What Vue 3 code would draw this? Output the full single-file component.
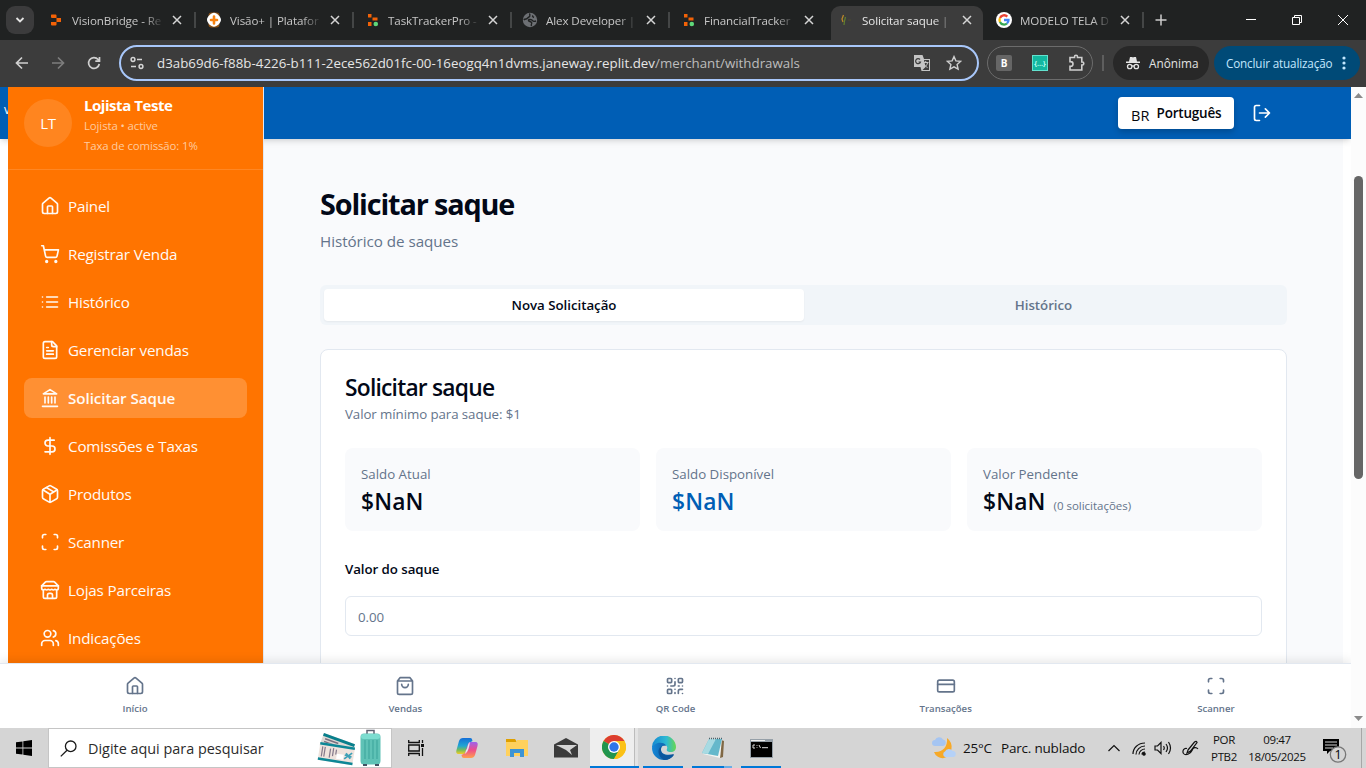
<script setup>
const replit = '<path fill="#f26207" d="M3.500 2.500h4a1 1 0 0 1 1 1V6H4a1 1 0 0 1-1-1V3zM8.500 6H13v4H8.500zM3 10h5.500v2.500a1 1 0 0 1-1 1H4a1 1 0 0 1-1-1z"/>'
const tracker = '<path fill="#f26207" d="M4 2h3.500v3.500H4zM8.500 5.500h5V8.500h-5zM4 10h3.500v4H4z"/><circle cx="11.800" cy="12" r="2.300" fill="#5fd87a"/>'
const tabs = [
  { label: 'VisionBridge - Re', icon: replit },
  { label: 'Visão+ | Platafor', icon: '<rect x="2.500" y=".5" width="11" height="15" rx="3" fill="#8b5216"/><path d="M8 .8c3 0 7 4 7 7s-4 7-7 7-7-4-7-7 4-7 7-7z" fill="#fff"/><path d="M8 4.500v7M5 8h6" stroke="#f7820f" stroke-width="2.600" stroke-linecap="round"/>' },
  { label: 'TaskTrackerPro -', icon: tracker },
  { label: 'Alex Developer |', icon: '<circle cx="8" cy="8" r="7.200" fill="#6d7074"/><path d="M8 1.500C7 3 9 4 7 5S5.500 7 4 7 1.800 8 1.800 8M9.500 14c-1-2 1-2 0-3.500S7 10 6.500 8.500 10 7.500 10.500 8.500s2 1 3.500.5M11 3.500c-1 1 0 1.500 1 2" fill="none" stroke="#202222" stroke-width="1.400"/>' },
  { label: 'FinancialTracker', icon: tracker },
  { label: 'Solicitar saque |', active: true, icon: '<path d="M5.500 3 4 7l1 3" fill="none" stroke="#b8862a" stroke-width="1.300"/><path d="m7.500 5-1 4L6 13" fill="none" stroke="#60802f" stroke-width="1.200"/><path d="M10 8h3" stroke="#4b4a2d"/>' },
  { label: 'MODELO TELA D', icon: '<circle cx="8" cy="8" r="8" fill="#fff"/><g fill="none" stroke-width="2.300"><path stroke="#ea4335" d="M4 6a4.500 4.500 0 0 1 7.300-1.400"/><path stroke="#fbbc05" d="M4 6a4.500 4.500 0 0 0 0 4"/><path stroke="#34a853" d="M4 10a4.500 4.500 0 0 0 7 1.500"/><path stroke="#4285f4" d="M8 8h4.500a4.500 4.500 0 0 1-1.500 3.500"/></g>' }
]

const home = '<path d="M15 21v-8a1 1 0 0 0-1-1h-4a1 1 0 0 0-1 1v8"/><path d="M3 10a2 2 0 0 1 .709-1.528l7-5.999a2 2 0 0 1 2.582 0l7 5.999A2 2 0 0 1 21 10v9a2 2 0 0 1-2 2H5a2 2 0 0 1-2-2z"/>'
const scan = '<path d="M3 7V5a2 2 0 0 1 2-2h2M17 3h2a2 2 0 0 1 2 2v2M21 17v2a2 2 0 0 1-2 2h-2M7 21H5a2 2 0 0 1-2-2v-2"/>'
const menu = [
  { label: 'Painel', icon: home },
  { label: 'Registrar Venda', icon: '<circle cx="8" cy="21" r="1"/><circle cx="19" cy="21" r="1"/><path d="M2.050 2.050h2l2.660 12.420a2 2 0 0 0 2 1.580h9.780a2 2 0 0 0 1.950-1.570l1.650-7.430H5.120"/>' },
  { label: 'Histórico', icon: '<path d="M8 6h13M8 12h13M8 18h13M3 6h.01M3 12h.01M3 18h.01"/>' },
  { label: 'Gerenciar vendas', icon: '<path d="M15 2H6a2 2 0 0 0-2 2v16a2 2 0 0 0 2 2h12a2 2 0 0 0 2-2V7Z"/><path d="M14 2v4a2 2 0 0 0 2 2h4M10 9H8M16 13H8M16 17H8"/>' },
  { label: 'Solicitar Saque', active: true, icon: '<path d="M3 22h18M6 18v-7M10 18v-7M14 18v-7M18 18v-7M12 2l8 5H4z"/>' },
  { label: 'Comissões e Taxas', icon: '<path d="M12 2v20M17 5H9.500a3.500 3.500 0 0 0 0 7h5a3.500 3.500 0 0 1 0 7H6"/>' },
  { label: 'Produtos', icon: '<path d="M11 21.730a2 2 0 0 0 2 0l7-4A2 2 0 0 0 21 16V8a2 2 0 0 0-1-1.730l-7-4a2 2 0 0 0-2 0l-7 4A2 2 0 0 0 3 8v8a2 2 0 0 0 1 1.730zM12 22V12"/><path d="m3.300 7 7.703 4.734a2 2 0 0 0 1.994 0L20.700 7M7.500 4.270l9 5.150"/>' },
  { label: 'Scanner', icon: scan },
  { label: 'Lojas Parceiras', icon: '<path d="m2 7 4.410-4.410A2 2 0 0 1 7.830 2h8.340a2 2 0 0 1 1.420.590L22 7M4 12v8a2 2 0 0 0 2 2h12a2 2 0 0 0 2-2v-8"/><path d="M15 22v-4a2 2 0 0 0-2-2h-2a2 2 0 0 0-2 2v4M2 7h20"/><path d="M22 7v3a2 2 0 0 1-2 2a2.700 2.700 0 0 1-1.590-.630.700.700 0 0 0-.820 0A2.700 2.700 0 0 1 16 12a2.700 2.700 0 0 1-1.590-.630.700.700 0 0 0-.820 0A2.700 2.700 0 0 1 12 12a2.700 2.700 0 0 1-1.590-.630.700.700 0 0 0-.820 0A2.700 2.700 0 0 1 8 12a2.700 2.700 0 0 1-1.590-.630.700.700 0 0 0-.820 0A2.700 2.700 0 0 1 4 12a2 2 0 0 1-2-2V7"/>' },
  { label: 'Indicações', icon: '<path d="M16 21v-2a4 4 0 0 0-4-4H6a4 4 0 0 0-4 4v2"/><circle cx="9" cy="7" r="4"/><path d="M22 21v-2a4 4 0 0 0-3-3.870M16 3.130a4 4 0 0 1 0 7.750"/>' }
]
const bottom = [
  { label: 'Início', icon: home },
  { label: 'Vendas', icon: '<path d="M6 2 3 6v14a2 2 0 0 0 2 2h14a2 2 0 0 0 2-2V6l-3-4ZM3 6h18M16 10a4 4 0 0 1-8 0"/>' },
  { label: 'QR Code', icon: '<rect width="5" height="5" x="3" y="3" rx="1"/><rect width="5" height="5" x="16" y="3" rx="1"/><rect width="5" height="5" x="3" y="16" rx="1"/><path d="M21 16h-3a2 2 0 0 0-2 2v3M21 21v.01M12 7v3a2 2 0 0 1-2 2H7M3 12h.01M12 3h.01M12 16v.01M16 12h1M21 12v.01M12 21v-1"/>' },
  { label: 'Transações', icon: '<rect width="20" height="14" x="2" y="5" rx="2"/><path d="M2 10h20"/>' },
  { label: 'Scanner', icon: scan }
]
const balances = [
  { label: 'Saldo Atual', value: '$NaN' },
  { label: 'Saldo Disponível', value: '$NaN', blue: true },
  { label: 'Valor Pendente', value: '$NaN', note: '(0 solicitações)' }
]
</script>

<template>
  <div class="screen">
    <div class="tabstrip">
      <div class="tabsearch"><svg width="10" height="10" viewBox="0 0 10 10"><path d="M1.500 3 5 6.500 8.500 3" fill="none" stroke="#e3e3e3" stroke-width="1.800" /></svg></div>
      <div v-for="(t, i) in tabs" :key="i" class="tab" :class="{ active: t.active, divided: i !== 4 && i !== 5 }">
        <svg class="fav" width="16" height="16" viewBox="0 0 16 16" v-html="t.icon"></svg>
        <span class="tabname">{{ t.label }}</span>
        <svg class="close" width="10" height="10" viewBox="0 0 10 10"><path d="m1 1 8 8M9 1 1 9" /></svg>
      </div>
      <svg class="plus" width="12" height="12" viewBox="0 0 12 12"><path d="M6 .5v11M.5 6h11" /></svg>
      <div class="wincontrols">
        <svg width="10" height="10" viewBox="0 0 10 10"><path d="M0 4.500h10" /></svg>
        <svg width="10" height="10" viewBox="0 0 10 10"><path d="M.5 2.500h7v7h-7zM2.500 2.500v-2h7v7h-2" /></svg>
        <svg width="10" height="10" viewBox="0 0 10 10"><path d="m0 0 10 10M10 0 0 10" /></svg>
      </div>
    </div>

    <div class="toolbar">
      <svg class="nav" width="14" height="14" viewBox="0 0 14 14"><path d="M13 7H2M7 1.500 1.500 7 7 12.500" /></svg>
      <svg class="nav dim" width="14" height="14" viewBox="0 0 14 14"><path d="M1 7h11M7 1.500 12.500 7 7 12.500" /></svg>
      <svg class="nav" width="14" height="14" viewBox="0 0 14 14"><path d="M12.300 8a5.400 5.400 0 1 1-1.200-4.500L12.500 5M12.500 1v4.200H8.300" /></svg>
      <div class="omnibox">
        <svg width="14" height="14" viewBox="0 0 14 14" fill="none" stroke="#d5d5d5" stroke-width="1.500"><circle cx="3" cy="3.500" r="1.900" /><path d="M7 3.500h5M1 10.500h5" /><circle cx="11" cy="10.500" r="1.900" /></svg>
        <span class="url">d3ab69d6-f88b-4226-b111-2ece562d01fc-00-16eogq4n1dvms.janeway.replit.dev<i>/merchant/withdrawals</i></span>
        <svg class="translate" width="18" height="18" viewBox="0 0 18 18"><path d="M1 1h8.500l1.500 4h6v12H8.500L7.500 13H1z" fill="#c4c4c4" /><path d="M11 6h5v10H9.500L12.500 13z" fill="#3c3c3c" /><path d="M7 5.500A2.500 2.500 0 1 0 7.500 8H5.500" fill="none" stroke="#3c3c3c" stroke-width="1.200" /><path d="M10 8.500h5.500M12.700 7v1.500M14.500 9c-.5 2-2 3.500-3 4M11 10c1 2 2.500 3 3.500 3.500" fill="none" stroke="#c4c4c4" /></svg>
        <svg width="16" height="16" viewBox="0 0 16 16"><path d="m8 1.600 1.900 4.300 4.700.5-3.500 3.100 1 4.700L8 11.800l-4.100 2.400 1-4.700-3.500-3.100 4.700-.5z" fill="none" stroke="#cfcfcf" stroke-width="1.400" /></svg>
      </div>
      <div class="extensions">
        <span class="ext b">B</span><span class="ext json">{...}</span>
        <svg width="18" height="18" viewBox="0 0 18 18"><path d="M2 3.500h4.500v-.7a1.500 1.500 0 0 1 3 0v.7h4.300V8h.5a1.500 1.500 0 0 1 0 3h-.5v5H2v-3.800h.7a2.300 2.300 0 0 0 0-4.600H2z" fill="none" stroke="#cfcfcf" stroke-width="1.600" /></svg>
      </div>
      <span class="rule"></span>
      <div class="incognito">
        <svg width="14" height="14" viewBox="0 0 14 14"><path d="M4 1h2l1 .5L8 1h2l1 4.500h3V7H0V5.500h3z" fill="#e3e3e3" /><g fill="none" stroke="#e3e3e3" stroke-width="1.300"><circle cx="3.700" cy="10.500" r="2.200" /><circle cx="10.300" cy="10.500" r="2.200" /><path d="M5.900 10h2.200" /></g></svg>
        <span>Anônima</span>
      </div>
      <div class="update"><span>Concluir atualização</span><svg width="4" height="14" viewBox="0 0 4 14" fill="#c2e7ff"><circle cx="2" cy="2" r="1.600" /><circle cx="2" cy="7" r="1.600" /><circle cx="2" cy="12" r="1.600" /></svg></div>
    </div>

    <div class="viewport">
      <div class="page">
        <header class="topbar">
          <span class="brand">v</span>
          <div class="lang"><span class="flag">BR</span><span>Português</span></div>
          <svg class="line logout" width="20" height="20" viewBox="0 0 24 24"><path d="M9 21H5a2 2 0 0 1-2-2V5a2 2 0 0 1 2-2h4M16 17l5-5-5-5M21 12H9" /></svg>
        </header>
        <aside class="sidebar">
          <div class="user">
            <div class="avatar">LT</div>
            <div class="who"><b>Lojista Teste</b><span>Lojista • active</span><span>Taxa de comissão: 1%</span></div>
          </div>
          <nav class="menu">
            <a v-for="m in menu" :key="m.label" :class="{ active: m.active }">
              <svg class="line" width="20" height="20" viewBox="0 0 24 24" v-html="m.icon"></svg><span>{{ m.label }}</span>
            </a>
          </nav>
        </aside>
        <main class="content">
          <h1>Solicitar saque</h1>
          <p class="sub">Histórico de saques</p>
          <div class="switcher"><button class="on">Nova Solicitação</button><button>Histórico</button></div>
          <section class="card">
            <h2>Solicitar saque</h2>
            <p class="hint">Valor mínimo para saque: $1</p>
            <div class="balances">
              <div v-for="b in balances" :key="b.label" class="balance">
                <span class="blabel">{{ b.label }}</span>
                <div class="bvalue" :class="{ blue: b.blue }">{{ b.value }}<small v-if="b.note">{{ b.note }}</small></div>
              </div>
            </div>
            <label>Valor do saque</label>
            <div class="input">0.00</div>
          </section>
        </main>
        <nav class="bottomnav">
          <a v-for="b in bottom" :key="b.label"><svg class="line" width="20" height="20" viewBox="0 0 24 24" v-html="b.icon"></svg><span>{{ b.label }}</span></a>
        </nav>
      </div>
      <div class="scrollbar">
        <svg width="9" height="5" viewBox="0 0 9 5"><path d="m0 5 4.500-5L9 5z" fill="#8b8b8b" /></svg>
        <div class="thumb"></div>
        <svg width="9" height="5" viewBox="0 0 9 5"><path d="m0 0 4.500 5L9 0z" fill="#8b8b8b" /></svg>
      </div>
    </div>

    <div class="taskbar">
      <div class="start"><svg width="16" height="16" viewBox="0 0 16 16"><path d="M0 2.300 6.500 1.400v6.100H0zM7.300 1.300 16 0v7.500H7.300zM0 8.400h6.500v6.200L0 13.700zM7.300 8.400H16V16l-8.700-1.200z" /></svg></div>
      <div class="search">
        <svg width="17" height="17" viewBox="0 0 17 17" fill="none" stroke="#1a1a1a" stroke-width="1.300"><circle cx="10.700" cy="6.300" r="5.300" /><path d="M7 10.200.8 16.400" /></svg>
        <span>Digite aqui para pesquisar</span>
        <svg class="trip" width="66" height="38" viewBox="0 0 66 38">
          <g transform="translate(8 4) rotate(20)"><path d="M0 0h33v13H0z" fill="#ded9d5" /><path d="M0 0h33v3H0z" fill="#087f8c" /><path d="M3 5h14M3 8h12" stroke="#7a7180" stroke-width="1.500" /></g>
          <g transform="translate(4.500 13) rotate(9)"><path d="M0 0h35v18H0z" fill="#eee3dd" /><path d="M0 0h35v2.500H0zM0 15.500h35V18H0z" fill="#0d8796" /><path d="M3 4v10M5.500 4v10M11 5v9M14 4v8M17 5v5" stroke="#83788a" stroke-width="1.200" /><path d="M18 9h7v5h-7z" fill="#fff" /><path d="m26 13 7-7M27 7l5 5M26 9l7 1" stroke="#3ca0b7" stroke-width="1.700" /></g>
          <path d="M51 7V1.500h7V7" fill="none" stroke="#5f6374" stroke-width="1.500" /><rect x="44.500" y="4.500" width="20" height="31" rx="3.500" fill="#5fc2b6" /><rect x="45" y="5" width="19" height="5" rx="2.500" fill="#7cddd0" /><path d="M49 11v19M53 11v19M57 11v19M61 11v19" stroke="#3aa39a" /><path d="M47 35h4v2h-4zM59 35h4v2h-4z" fill="#405263" />
        </svg>
      </div>
      <div class="apps">
        <div class="app"><svg width="17" height="16" viewBox="0 0 17 16" fill="none" stroke="#111" stroke-width="1.300"><path d="M.7 0v2.500h10.600V0M.7 16v-2.500h10.600V16M.7 5h10.600v6H.7zM14.500 0v3M14.500 8v8" /><path d="M13 4h3v3h-3z" fill="#111" stroke="none" /></svg></div>
        <div class="app"><svg width="24" height="24" viewBox="0 0 24 24"><defs><linearGradient id="cp1" x2="0" y2="1"><stop stop-color="#146ed8" /><stop offset=".5" stop-color="#20a6d4" /><stop offset=".75" stop-color="#75bc59" /><stop offset="1" stop-color="#f4cd26" /></linearGradient><linearGradient id="cp2" x2="0" y2="1"><stop stop-color="#9c62ed" /><stop offset=".5" stop-color="#ef4d8a" /><stop offset="1" stop-color="#ffa04d" /></linearGradient></defs><path d="M8 2h7c2 0 2 1 2.500 3L14 7l-3 9c-.7 2-2 2-4 2H4c-3 0-3-2-2.500-4L4 5c.7-2 2-3 4-3z" fill="url(#cp1)" /><path d="M16 22H9c-2 0-2-1-2.500-3l3.500-2 3-9c.7-2 2-2 4-2h3c3 0 3 2 2.500 4L20 19c-.7 2-2 3-4 3z" fill="url(#cp2)" /><path d="M11 14c2-1 1-6 4-8-1 4-1 9-5 12z" fill="#e5e8ec" /></svg></div>
        <div class="app"><svg width="22" height="20" viewBox="0 0 22 20"><path d="M0 1h9l2 3H0z" fill="#dfa000" /><path d="M0 4h10l1-2h11v16H0z" fill="#ffd15d" /><path d="M4 11h14v8h-4v-4H8v4H4z" fill="#3d94d4" /></svg></div>
        <div class="app"><svg width="24" height="20" viewBox="0 0 24 20"><path d="M0 6.500 12 0l12 6.500V19.500H0z" fill="#3b3b3b" /><path d="M2 7h21l-7 5 2 5-6-5z" fill="#d5d5d5" /></svg></div>
        <div class="app current"><svg width="24" height="24" viewBox="0 0 24 24"><circle cx="12" cy="12" r="12" fill="#fbc116" /><path d="M12 12 1.600 6A12 12 0 0 1 22.400 6z" fill="#dc3d30" /><path d="M1.600 6A12 12 0 0 0 12 24l5.200-9z" fill="#21954e" /><path d="M12 6h10.400A12 12 0 0 1 12 24l5.200-9z" fill="#fbc116" /><circle cx="12" cy="12" r="6" fill="#fff" /><circle cx="12" cy="12" r="4.700" fill="#2f75e8" /></svg></div>
        <div class="app open"><svg width="24" height="24" viewBox="0 0 24 24"><defs><linearGradient id="ed1"><stop stop-color="#1689d2" /><stop offset=".6" stop-color="#2eb9d3" /><stop offset="1" stop-color="#67d850" /></linearGradient><linearGradient id="ed2"><stop stop-color="#1688d8" /><stop offset="1" stop-color="#094e92" /></linearGradient></defs><path d="M0 12a12 12 0 0 1 24-1c0 3-2 5-5 5s-5-1-4-3c2-5-8-7-15-1z" fill="url(#ed1)" /><path d="M0 12C3 5 13 6 14 10c-4-1-5 1-5 4 0 4 6 6 13 4-2 4-6 6-10 6A12 12 0 0 1 0 12z" fill="url(#ed2)" /><path d="M10 10c-5 2-5 10 2 14 4 0 8-2 10-5-6 2-13 0-13-5 0-2 0-3 1-4z" fill="#0c579e" /></svg></div>
        <div class="app open partial"><svg width="24" height="22" viewBox="0 0 24 22"><path d="m20 3 3 1-1 16-3 1z" fill="#806845" /><path d="M8 2h13l-2 19-17-4z" fill="#f4f5f2" /><path d="M8 2h13l-4 17L1 16z" fill="#65b8cb" /><path d="M8 2h7L7 17l-6-1z" fill="#a8dae2" /><path d="M8 1.500h13" stroke="#4b646c" stroke-dasharray="1 1" stroke-width="1.500" /></svg></div>
        <div class="app open"><svg width="23" height="19" viewBox="0 0 23 19"><path d="M0 0h23v19H0z" fill="#96a0a8" /><path d="M1 3h21v15H1z" fill="#000" /><path d="M1 1h14v1H1z" fill="#eee" /><path d="M5 6H3v3h2M7 6v.8M7 8.300V9M9 6l1.500 3M12 8.700h6" fill="none" stroke="#ddd" /></svg></div>
      </div>
      <div class="weather">
        <svg width="26" height="26" viewBox="0 0 26 26"><path d="M16 3a11.500 11.500 0 0 1-3 20A9 9 0 0 1 3 17c8 1 14-5 13-14z" fill="#f7a928" /><path d="M4 11a3 3 0 0 1 0-6 4.500 4.500 0 0 1 8-.5 3.300 3.300 0 0 1 0 6.500z" fill="#a5c5f2" /><path d="M14 22a3 3 0 0 1 0-5.500 4.200 4.200 0 0 1 7.500-.5A3 3 0 0 1 22 22z" fill="#b5d1f7" /></svg>
        <span>25°C</span><span>Parc. nublado</span>
      </div>
      <svg class="caret" width="14" height="8" viewBox="0 0 14 8"><path d="m1.500 7 5.500-5.500L12.500 7" /></svg>
      <svg class="wifi" width="15" height="15" viewBox="0 0 15 15"><path d="M1 13C1 7 6 2 13 2M4 13.500C4 9 8 5 13 5M7 13.500C7 10.500 10 8 13 8M10 13.500c0-1.500 1.500-2.500 3-2.500" /><circle cx="12" cy="13" r="1.200" fill="#111" /></svg>
      <svg class="sound" width="18" height="14" viewBox="0 0 18 14"><path d="M1 5h2.500L7 1.500v11L3.500 9H1zM9.500 5q1.500 2 0 4M12 3q3 4 0 8M14.500 1q4 6 0 12" /></svg>
      <svg class="pen" width="17" height="16" viewBox="0 0 17 16"><path d="m6 10 6.500-8q2-1.500 2.500.5L8.500 11 5 13zM5 8.500C2 7.500 0 11 1.500 13.500c2 2.500 7 .5 8.500-3 1-3 4-4 6-1.500" /></svg>
      <div class="locale"><span>POR</span><span>PTB2</span></div>
      <div class="clock"><span>09:47</span><span>18/05/2025</span></div>
      <svg class="notice" width="26" height="26" viewBox="0 0 26 26"><path d="M1 2h16v12H8l-3 3v-3H1z" fill="#000" /><path d="M3 5h12M3 8h12M3 11h8" stroke="#d5d5d5" /><circle cx="16" cy="17.500" r="7.700" fill="#d5d5d5" stroke="#777" stroke-width="1.300" /><text x="16" y="22" text-anchor="middle">1</text></svg>
      <span class="peek"></span>
    </div>
  </div>
</template>

<style>
body { margin: 0; overflow: hidden; }
</style>

<style scoped>
* { box-sizing: border-box; }
.screen { width: 1366px; height: 768px; display: flex; flex-direction: column; overflow: hidden; font-family: "Open Sans", "Noto Sans", sans-serif; color: #020817; }
svg { flex: none; display: block; }
.line { fill: none; stroke: currentColor; stroke-width: 2; stroke-linecap: round; stroke-linejoin: round; }

.tabstrip { height: 40px; flex: none; background: #202222; display: flex; align-items: center; padding-left: 6px; }
.tabsearch { width: 28px; height: 28px; border-radius: 9px; background: #3b3b3c; display: flex; align-items: center; justify-content: center; margin-right: 4px; }
.tab { position: relative; width: 158px; height: 40px; flex: none; display: flex; align-items: center; padding-left: 10px; color: #c7c7c7; font-size: 11.600px; }
.fav { z-index: 1; }
.tabname { width: 90px; margin-left: 8px; white-space: nowrap; letter-spacing: -.1px; z-index: 1; mask-image: linear-gradient(90deg, #000 72px, transparent 92px); }
.close { margin-left: 10px; stroke: #d5d5d5; stroke-width: 1.500; z-index: 1; }
.tab.divided::after { content: ""; position: absolute; right: 0; top: 12px; width: 2px; height: 16px; background: #444646; }
.tab.active { color: #e6e6e6; }
.tab.active::before { content: ""; position: absolute; left: 3px; right: 3px; top: 6px; bottom: 0; background: #3c3c3c; border-radius: 9px 9px 0 0; }
.plus { margin-left: 11px; stroke: #ccc; stroke-width: 1.500; }
.wincontrols { margin-left: auto; display: flex; gap: 36px; padding-right: 18px; }
.wincontrols path { fill: none; stroke: #fff; }

.toolbar { height: 47px; flex: none; background: #3c3c3c; display: flex; align-items: center; padding: 0 6px 1px 15px; }
.nav { margin-right: 22px; fill: none; stroke: #d0d0d0; stroke-width: 1.700; }
.nav.dim { stroke: #7d7d7d; }
.nav + .omnibox { margin-left: -4px; }
.omnibox { width: 860px; height: 36px; flex: none; border: 2px solid #a8c7fa; border-radius: 18px; display: flex; align-items: center; padding: 0 15px 0 9px; }
.url { margin-left: 13px; font-size: 13.300px; color: #e6e6e6; white-space: nowrap; letter-spacing: .015px; }
.url i { font-style: normal; color: #bdbdbd; }
.translate { margin: 0 15px 0 auto; }
.extensions { margin-left: 8px; width: 106px; height: 34px; border: 1px solid #6c6c6c; border-radius: 17px; display: flex; align-items: center; padding-left: 8px; flex: none; }
.ext { width: 16px; height: 16px; margin-right: 20px; display: grid; place-items: center; font-size: 10px; font-weight: 700; color: #fff; }
.ext.b { background: #666; border-radius: 2px; }
.ext.json { background: #13b8a0; border: 1px solid #63e2cf; font-size: 7px; color: #b7fff4; }
.rule { width: 2px; height: 16px; background: #5e5e5e; margin: 0 9px; }
.incognito { width: 96px; height: 34px; border-radius: 17px; background: #282828; color: #e3e3e3; font-size: 11.800px; display: flex; align-items: center; padding-left: 13px; gap: 9px; flex: none; }
.update { width: 146px; height: 34px; border-radius: 17px; margin-left: 5px; background: #004a77; color: #c2e7ff; font-size: 11.700px; display: flex; align-items: center; justify-content: space-between; padding: 0 14px 0 12px; flex: none; letter-spacing: -.15px; white-space: nowrap; }

.viewport { height: 641px; flex: none; display: flex; }
.page { width: 1351px; display: grid; grid-template: 52px 524px 65px / 8px 256px 1079px 8px; background: #fff; overflow: hidden; }
.topbar { grid-area: 1 / 1 / 2 / 5; z-index: 2; background: #005eb5; color: #fff; display: flex; align-items: center; padding: 0 79px 0 4px; box-shadow: 0 4px 6px -1px #0000001a, 0 2px 4px -2px #0000001a; }
.brand { font-size: 12px; margin-top: -8px; }
.lang { margin-left: auto; width: 116px; height: 32px; border-radius: 4px; background: #fff; color: #05070d; display: flex; align-items: center; padding-left: 13px; gap: 7px; font-size: 13.500px; font-weight: 600; box-shadow: 0 3px 6px #0003; letter-spacing: -.2px; }
.flag { font-weight: 400; font-size: 14.500px; position: relative; top: 2px; letter-spacing: .1px; }
.logout { margin-left: 18px; }
.sidebar { grid-area: 1 / 2 / 3 / 3; z-index: 3; background: #ff7400; border-right: 1px solid #e2e8f0; color: #fff; overflow: hidden; }
.user { height: 83px; border-bottom: 1px solid #ff8724; display: flex; padding: 8px 0 0 16px; gap: 12px; }
.avatar { width: 48px; height: 48px; margin-top: 4px; border-radius: 50%; background: #ff851f; display: grid; place-items: center; font-size: 15px; letter-spacing: -.3px; }
.who { display: flex; flex-direction: column; line-height: 20px; font-size: 11.400px; }
.who span { color: #ffcb9f; position: relative; top: 1px; letter-spacing: -.1px; }
.who b { font-size: 15px; font-weight: 700; letter-spacing: -.45px; }
.menu { padding: 16px 16px 0; display: flex; flex-direction: column; gap: 8px; }
.menu a { height: 40px; display: flex; align-items: center; gap: 8px; padding-left: 16px; border-radius: 8px; font-size: 15.200px; color: #fffaf5; flex: none; white-space: nowrap; }
.menu a span { letter-spacing: -.18px; }
.menu a.active { background: #ff9033; font-weight: 600; }
.menu a.active span { letter-spacing: -.07px; }

.content { grid-area: 2 / 3 / 3 / 4; background: #f9fafc; padding: 47px 56px 0; overflow: hidden; }
h1 { margin: 0; font-size: 28.800px; line-height: 36px; font-weight: 700; letter-spacing: -1.130px; }
.sub { margin: 7px 0 0; font-size: 15.200px; line-height: 24px; color: #64748b; letter-spacing: -.04px; }
.switcher { margin-top: 32px; height: 40px; border-radius: 6px; background: #f1f5f9; padding: 4px; display: grid; grid-template-columns: 480px 1fr; }
button { border: 0; background: none; border-radius: 4px; font: 600 13.300px "Open Sans", sans-serif; color: #64748b; letter-spacing: -.03px; padding: 0; }
button.on { background: #fff; color: #020817; box-shadow: 0 1px 2px #0000000d; }
.card { margin-top: 24px; height: 400px; border: 1px solid #e2e8f0; border-radius: 8px; background: #fff; padding: 24px; }
h2 { margin: 0; font-size: 22.800px; line-height: 28px; font-weight: 600; letter-spacing: -.78px; }
.hint { margin: 2px 0 0; font-size: 13.300px; line-height: 20px; color: #64748b; letter-spacing: -.08px; }
.balances { margin-top: 24px; display: grid; grid-template-columns: repeat(3, 1fr); gap: 16px; }
.balance { height: 83px; border-radius: 8px; background: #f9fafc; padding: 16px; }
.blabel { display: block; font-size: 13.300px; line-height: 20px; color: #64748b; }
.bvalue { font-size: 22.800px; line-height: 32px; font-weight: 600; margin-top: 2px; letter-spacing: .15px; }
.bvalue.blue { color: #005eb5; }
small { font-size: 11.500px; font-weight: 400; color: #64748b; margin-left: 8px; letter-spacing: -.02px; }
label { display: block; margin-top: 28px; font-size: 13.300px; line-height: 20px; font-weight: 600; letter-spacing: -.07px; }
.input { margin-top: 17px; height: 40px; border: 1px solid #e2e8f0; border-radius: 6px; padding: 0 12px; font-size: 13.300px; line-height: 40px; color: #64748b; letter-spacing: -.1px; }
.bottomnav { grid-area: 3 / 1 / 4 / 5; z-index: 4; background: #fff; border-top: 1px solid #e2e8f0; display: grid; grid-template-columns: repeat(5, 1fr); box-shadow: 0 -2px 10px #0000001a; }
.bottomnav a { display: flex; flex-direction: column; align-items: center; padding-top: 12px; gap: 5px; color: #64748b; font-size: 9.600px; font-weight: 600; line-height: 15px; }
.scrollbar { width: 15px; background: #fcfcfc; display: flex; flex-direction: column; align-items: center; padding: 6px 0 7px; }
.thumb { width: 9px; height: 303px; border-radius: 5px; background: #666; margin: 78px 0 auto; }

.taskbar { height: 40px; flex: none; background: #d5d5d5; display: flex; align-items: center; color: #111; }
.start { width: 48px; display: flex; justify-content: center; }
.search { width: 344px; height: 40px; border: 1px solid #c5c5c5; background: #fff; display: flex; align-items: center; padding-left: 11px; font-size: 14.400px; color: #2b2b2b; white-space: nowrap; letter-spacing: 0; }
.search span { margin-left: 11px; }
.trip { margin: 0 9px 0 auto; }
.apps { display: flex; height: 40px; }
.app { position: relative; width: 49px; height: 40px; display: grid; place-items: center; }
.apps .app:nth-child(-n+2) { width: 50px; }
.apps .app:nth-child(1) { padding-right: 2px; }
.app.current { background: linear-gradient(90deg, #eee 44px, #bcbcbc 44px 45px, #e3e3e3 45px 48px, #d5d5d5 48px); padding-right: 1px; border-bottom: 2px solid #0078d7; }
.app.open::after { content: ""; position: absolute; left: 4px; bottom: 0; width: 40px; height: 2px; background: #0078d7; }
.app.partial::after { background: linear-gradient(90deg, #0078d7 32px, #6aaee6 32px); }
.weather { margin-left: 145px; display: flex; align-items: center; font-size: 13.500px; white-space: nowrap; width: 177px; letter-spacing: -.2px; }
.weather span:nth-of-type(1) { margin-left: 6px; width: 38px; }
.caret, .wifi, .sound, .pen { fill: none; stroke: #111; stroke-width: 1.200; }
.caret { margin-left: -1px; }
.wifi { margin-left: 11px; }
.sound { margin-left: 7px; }
.pen { margin-left: 10px; }
.locale, .clock { display: flex; flex-direction: column; align-items: center; line-height: 17px; font-size: 11.500px; letter-spacing: -.35px; flex: none; }
.locale { width: 28px; margin-left: 11px; }
.clock { width: 60px; margin-left: 9px; }
.notice { margin-left: 15px; margin-top: 4px; font-size: 12.500px; }
.peek { width: 1px; height: 40px; background: #a7a7a7; margin: 0 4px 0 auto; }
</style>
